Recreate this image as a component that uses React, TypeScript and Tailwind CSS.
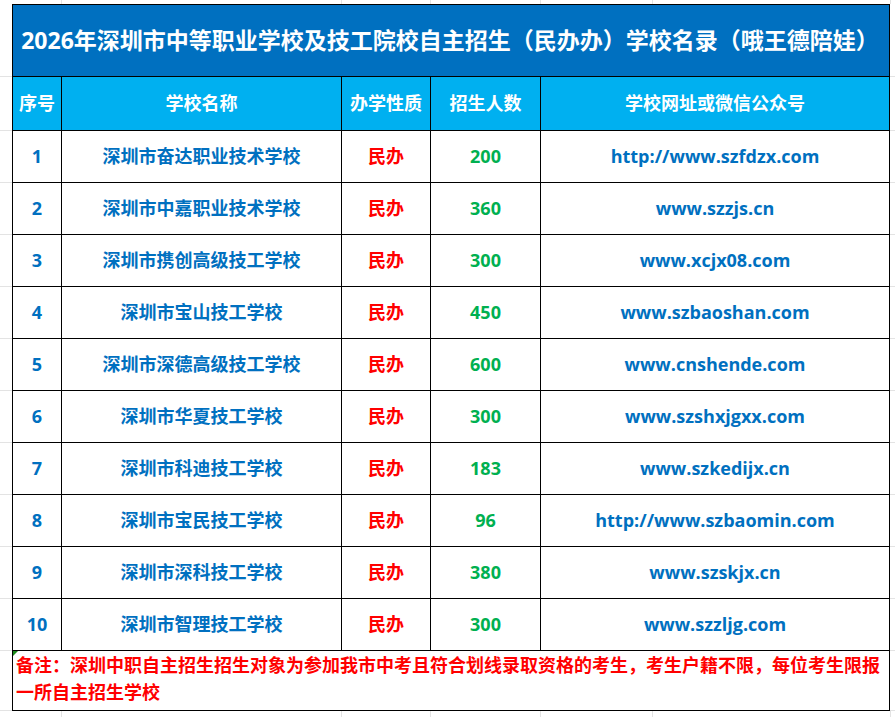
import React from 'react';

interface School {
  no: number;
  name: string;
  count: number;
  site: string;
}

const schools: School[] = [
  { no: 1, name: '深圳市奋达职业技术学校', count: 200, site: 'http://www.szfdzx.com' },
  { no: 2, name: '深圳市中嘉职业技术学校', count: 360, site: 'www.szzjs.cn' },
  { no: 3, name: '深圳市携创高级技工学校', count: 300, site: 'www.xcjx08.com' },
  { no: 4, name: '深圳市宝山技工学校', count: 450, site: 'www.szbaoshan.com' },
  { no: 5, name: '深圳市深德高级技工学校', count: 600, site: 'www.cnshende.com' },
  { no: 6, name: '深圳市华夏技工学校', count: 300, site: 'www.szshxjgxx.com' },
  { no: 7, name: '深圳市科迪技工学校', count: 183, site: 'www.szkedijx.cn' },
  { no: 8, name: '深圳市宝民技工学校', count: 96, site: 'http://www.szbaomin.com' },
  { no: 9, name: '深圳市深科技工学校', count: 380, site: 'www.szskjx.cn' },
  { no: 10, name: '深圳市智理技工学校', count: 300, site: 'www.szzljg.com' },
];

// sheet gridline strip above / below the table
function GridStrip({ className }: { className: string }) {
  return (
    <div className={`flex ${className}`}>
      <div className="w-[62px] shrink-0 border-r border-[#e3e3e3]" />
      <div className="w-[280px] shrink-0 border-r border-[#e3e3e3]" />
      <div className="w-[89px] shrink-0 border-r border-[#e3e3e3]" />
      <div className="w-[110px] shrink-0 border-r border-[#e3e3e3]" />
      <div className="w-[112px] shrink-0 border-r border-[#e3e3e3]" />
      <div className="w-[238px] shrink-0 border-r border-[#e3e3e3]" />
    </div>
  );
}

function SideStrip({ width }: { width: string }) {
  return (
    <div className={`${width} shrink-0 flex flex-col`}>
      <div className="h-[73px] border-b border-[#e3e3e3]" />
      <div className="h-[54px] border-b border-[#e3e3e3]" />
      {schools.map((s) => (
        <div key={s.no} className="h-[52px] border-b border-[#e3e3e3]" />
      ))}
      <div className="h-[60px] border-b border-[#e3e3e3]" />
    </div>
  );
}

const cell = 'border-r border-b border-black flex items-center justify-center';

export default function App() {
  return (
    <div className="w-[895px] h-[717px] bg-white overflow-hidden flex flex-col font-['Open_Sans','Noto_Sans_CJK_SC',sans-serif] font-bold">
      <GridStrip className="h-[4px] shrink-0" />

      <div className="flex">
        <SideStrip width="w-[12px]" />

        {/* Table */}
        <div className="w-[878px] shrink-0 border-l border-t border-black">
          <div className="h-[72px] bg-[#0070c0] border-r border-b border-black flex items-center justify-center text-white text-[23px] whitespace-nowrap pr-[2px]">
            2026年深圳市中等职业学校及技工院校自主招生（民办办）学校名录（哦王德陪娃）
          </div>

          <div className="grid grid-cols-[49px_280px_89px_110px_349px] h-[54px] bg-[#00b0f0] text-white text-[18px]">
            <div className={cell}>序号</div>
            <div className={cell}>学校名称</div>
            <div className={cell}>办学性质</div>
            <div className={cell}>招生人数</div>
            <div className={cell}>学校网址或微信公众号</div>
          </div>

          {schools.map((s) => (
            <div key={s.no} className="grid grid-cols-[49px_280px_89px_110px_349px] h-[52px] text-[18px]">
              <div className={`${cell} text-[#0070c0]`}>{s.no}</div>
              <div className={`${cell} text-[#0070c0]`}>{s.name}</div>
              <div className={`${cell} text-[#ff0000]`}>民办</div>
              <div className={`${cell} text-[#00b050]`}>{s.count}</div>
              <div className={`${cell} text-[#0070c0]`}>{s.site}</div>
            </div>
          ))}

          <div className="relative h-[60px] border-r border-b border-black pl-[3px] pt-px text-[18px] leading-[27px] text-[#ff0000]">
            <span className="absolute left-0 top-0 w-0 h-0 border-t-[5px] border-t-[#1a8a1a] border-r-[5px] border-r-transparent" />
            <div className="whitespace-nowrap">备注：深圳中职自主招生招生对象为参加我市中考且符合划线录取资格的考生，考生户籍不限，每位考生限报</div>
            <div className="whitespace-nowrap">一所自主招生学校</div>
          </div>
        </div>

        <SideStrip width="w-[5px]" />
      </div>

      <GridStrip className="flex-1" />
    </div>
  );
}
